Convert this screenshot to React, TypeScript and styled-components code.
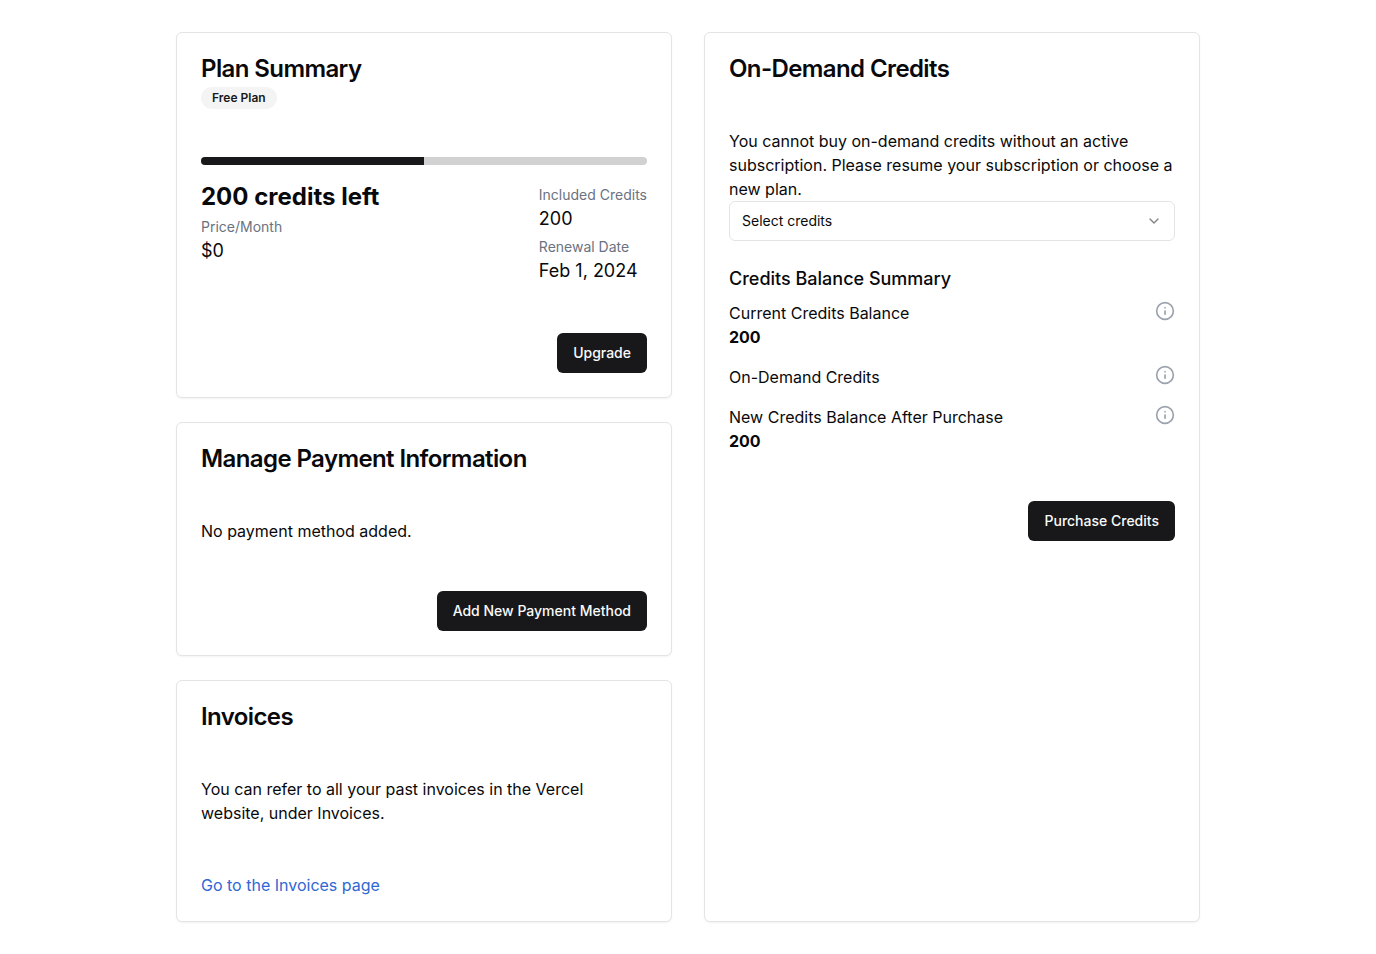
import React from 'react';
import styled, { createGlobalStyle } from 'styled-components';
import { ChevronDown, Info } from 'lucide-react';

const GlobalStyle = createGlobalStyle`
  *, *::before, *::after { box-sizing: border-box; }
  body {
    margin: 0;
    background: #ffffff;
    color: #09090b;
    font-family: Inter, "Liberation Sans", sans-serif;
    font-size: 16px;
    line-height: 24px;
  }
  h2, h3, p, dl, dt, dd { margin: 0; }
  button, select { font-family: inherit; }
`;

const Page = styled.main`
  display: grid;
  grid-template-columns: repeat(2, minmax(0, 1fr));
  gap: 32px;
  max-width: 1024px;
  margin: 32px auto;

  @media (max-width: 720px) {
    grid-template-columns: minmax(0, 1fr);
    padding: 0 16px;
  }
`;

const Column = styled.div`
  display: flex;
  flex-direction: column;
  gap: 24px;
`;

const Card = styled.section<{ $fill?: boolean }>`
  display: flex;
  flex-direction: column;
  gap: 48px;
  flex-grow: ${({ $fill }) => ($fill ? 1 : 0)};
  padding: 24px;
  border: 1px solid #e4e4e7;
  border-radius: 6px;
  background: #ffffff;
  box-shadow: 0 1px 2px rgba(0, 0, 0, 0.05);
`;

const CardHeader = styled.header`
  display: flex;
  flex-direction: column;
  align-items: flex-start;
  gap: 6px;
`;

const CardTitle = styled.h2`
  font-size: 24px;
  font-weight: 600;
  line-height: 24px;
  letter-spacing: -0.025em;
`;

const Badge = styled.span`
  padding: 2px 10px;
  border: 1px solid transparent;
  border-radius: 11px;
  background: #f4f4f5;
  color: #18181b;
  font-size: 12px;
  font-weight: 600;
  line-height: 16px;
`;

const CardFooter = styled.footer`
  display: flex;
  justify-content: flex-end;
`;

const Button = styled.button`
  height: 40px;
  padding: 0 16px;
  border: 0;
  border-radius: 6px;
  background: #18181b;
  color: #fafafa;
  font-size: 14px;
  font-weight: 500;
  line-height: 20px;
  cursor: pointer;
`;

const Usage = styled.div`
  display: flex;
  flex-direction: column;
  gap: 16px;
`;

const Meter = styled.div`
  height: 8px;
  border-radius: 4px;
  background: #d1d1d1;
  overflow: hidden;
`;

const MeterFill = styled.div`
  height: 100%;
  background: #18181b;
`;

const UsageDetails = styled.div`
  display: flex;
  justify-content: space-between;
`;

const Remaining = styled.p`
  margin-bottom: 4px;
  font-size: 24px;
  font-weight: 700;
  line-height: 32px;
`;

const FactList = styled.dl`
  display: flex;
  flex-direction: column;
  gap: 4px;
`;

const SideFacts = styled(FactList)`
  padding-top: 4px;
`;

const FactLabel = styled.dt`
  color: #6b7280;
  font-size: 14px;
  line-height: 20px;
`;

const FactValue = styled.dd`
  font-size: 18px;
  line-height: 28px;
`;

const SelectField = styled.div`
  display: grid;
  align-items: center;

  > * { grid-area: 1 / 1; }
  > svg {
    justify-self: end;
    margin-right: 13px;
    opacity: 0.5;
    pointer-events: none;
  }
`;

const Select = styled.select`
  appearance: none;
  width: 100%;
  height: 40px;
  padding: 0 40px 0 12px;
  border: 1px solid #e4e4e7;
  border-radius: 6px;
  background: #ffffff;
  color: #09090b;
  font-size: 14px;
  line-height: 20px;
`;

const Summary = styled.div`
  display: flex;
  flex-direction: column;
  gap: 8px;
  margin-top: 24px;
`;

const SummaryTitle = styled.h3`
  font-size: 18px;
  font-weight: 500;
  line-height: 28px;
`;

const BalanceList = styled.dl`
  display: flex;
  flex-direction: column;
  gap: 16px;
`;

const BalanceRow = styled.div`
  display: grid;
  grid-template-columns: 1fr auto;
  align-items: start;
`;

const BalanceValue = styled.dd`
  grid-column: 1;
  font-weight: 700;
`;

const InfoButton = styled.button`
  display: flex;
  padding: 0;
  border: 0;
  background: none;
  color: #9ca3af;
  cursor: pointer;
`;

const InfoCell = styled.dd`
  grid-column: 2;
`;

const Link = styled.a`
  align-self: flex-start;
  color: #2f67d3;
  text-decoration: none;
`;

const Fact = ({ label, value }: { label: string; value: string }) => (
  <div>
    <FactLabel>{label}</FactLabel>
    <FactValue>{value}</FactValue>
  </div>
);

const balances: { label: string; value?: string }[] = [
  { label: 'Current Credits Balance', value: '200' },
  { label: 'On-Demand Credits' },
  { label: 'New Credits Balance After Purchase', value: '200' },
];

export default function App() {
  const usedPercent = 50;

  return (
    <>
      <GlobalStyle />
      <Page>
        <Column>
          <Card>
            <CardHeader>
              <CardTitle>Plan Summary</CardTitle>
              <Badge>Free Plan</Badge>
            </CardHeader>
            <Usage>
              <Meter
                role="progressbar"
                aria-label="Credits used"
                aria-valuenow={usedPercent}
                aria-valuemin={0}
                aria-valuemax={100}
              >
                <MeterFill style={{ width: `${usedPercent}%` }} />
              </Meter>
              <UsageDetails>
                <div>
                  <Remaining>200 credits left</Remaining>
                  <FactList>
                    <Fact label="Price/Month" value="$0" />
                  </FactList>
                </div>
                <SideFacts>
                  <Fact label="Included Credits" value="200" />
                  <Fact label="Renewal Date" value="Feb 1, 2024" />
                </SideFacts>
              </UsageDetails>
            </Usage>
            <CardFooter>
              <Button type="button">Upgrade</Button>
            </CardFooter>
          </Card>

          <Card>
            <CardTitle>Manage Payment Information</CardTitle>
            <p>No payment method added.</p>
            <CardFooter>
              <Button type="button">Add New Payment Method</Button>
            </CardFooter>
          </Card>

          <Card>
            <CardTitle>Invoices</CardTitle>
            <p>You can refer to all your past invoices in the Vercel website, under Invoices.</p>
            <Link href="#invoices">Go to the Invoices page</Link>
          </Card>
        </Column>

        <Column>
          <Card $fill>
            <CardTitle>On-Demand Credits</CardTitle>
            <div>
              <p id="credits-note">
                You cannot buy on-demand credits without an active subscription. Please resume your
                subscription or choose a new plan.
              </p>
              <SelectField>
                <Select aria-label="Credits" aria-describedby="credits-note" defaultValue="">
                  <option value="">Select credits</option>
                </Select>
                <ChevronDown size={16} aria-hidden />
              </SelectField>
              <Summary>
                <SummaryTitle>Credits Balance Summary</SummaryTitle>
                <BalanceList>
                  {balances.map(({ label, value }) => (
                    <BalanceRow key={label}>
                      <dt>{label}</dt>
                      <InfoCell>
                        <InfoButton type="button" aria-label={`About ${label}`}>
                          <Info size={20} aria-hidden />
                        </InfoButton>
                      </InfoCell>
                      {value && <BalanceValue>{value}</BalanceValue>}
                    </BalanceRow>
                  ))}
                </BalanceList>
              </Summary>
            </div>
            <CardFooter>
              <Button type="button">Purchase Credits</Button>
            </CardFooter>
          </Card>
        </Column>
      </Page>
    </>
  );
}
